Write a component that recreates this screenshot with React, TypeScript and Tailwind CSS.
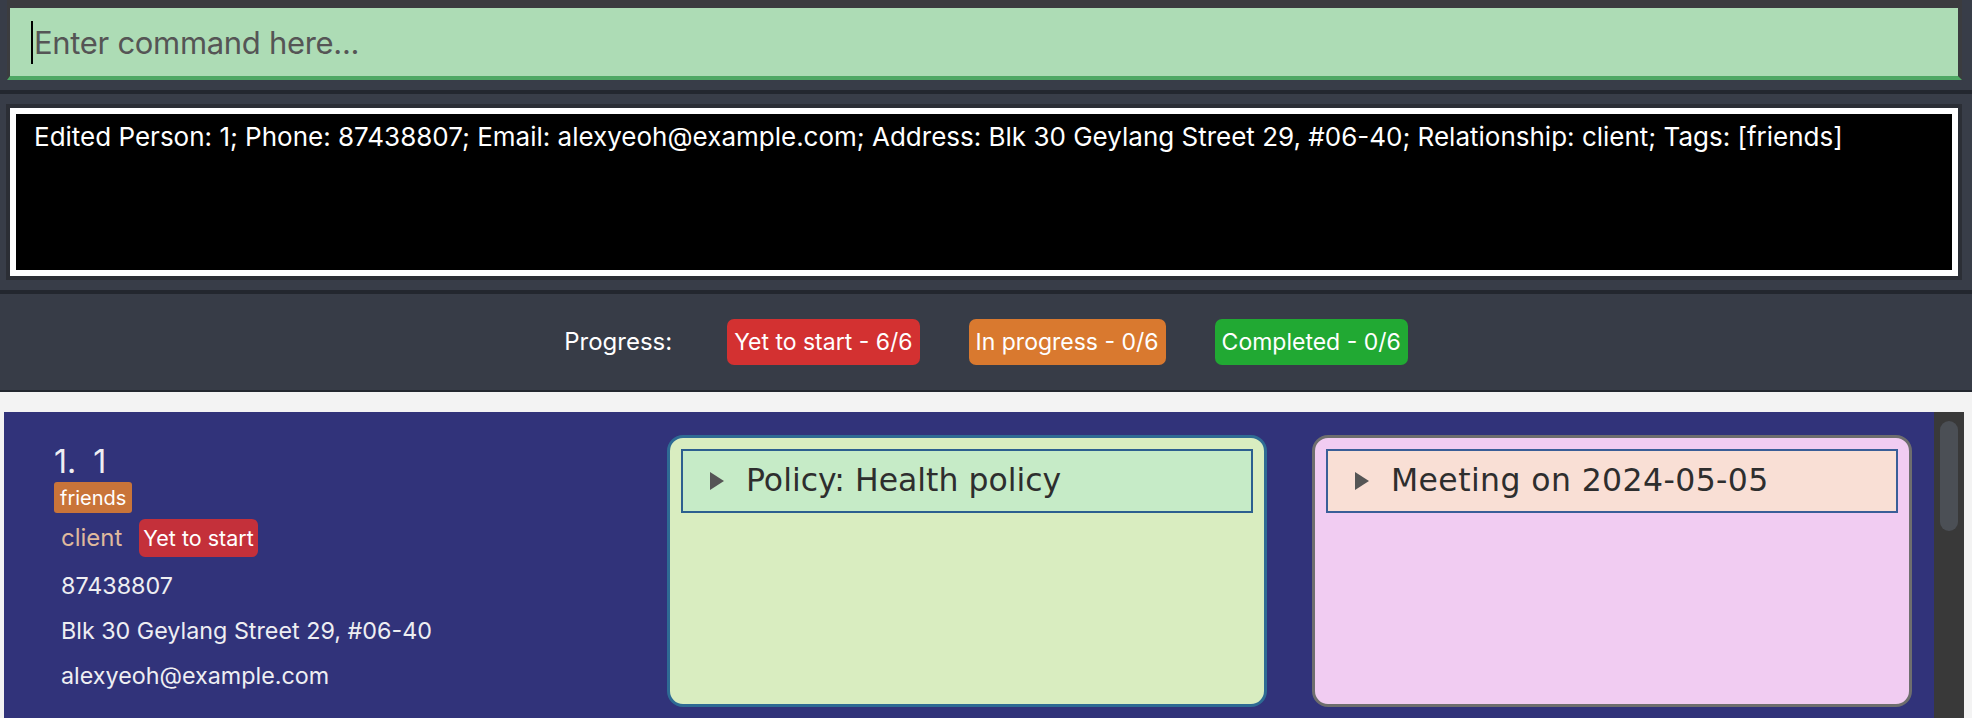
import React from "react";

function Caret() {
  return (
    <svg width="14" height="18" viewBox="0 0 14 18" className="shrink-0" aria-hidden="true">
      <path d="M0 0L14 9L0 18Z" fill="#555555" />
    </svg>
  );
}

function ProgressBadge({ label, color }: { label: string; color: string }) {
  return (
    <div className={`h-[46px] flex items-center px-[7px] rounded-[7px] text-white text-[23px] ${color}`}>
      {label}
    </div>
  );
}

function InfoCard({
  title,
  cardClass,
  headClass,
  titleClass,
}: {
  title: string;
  cardClass: string;
  headClass: string;
  titleClass: string;
}) {
  return (
    <div className={`w-[600px] h-[272px] shrink-0 rounded-[16px] border-[3px] p-[11px] ${cardClass}`}>
      <div className={`h-[64px] flex items-center gap-[22px] pl-[27px] border-2 ${headClass}`}>
        <Caret />
        <span className={`font-['DejaVu_Sans',sans-serif] text-[31.5px] leading-none text-[#2e2e2e] ${titleClass}`}>
          {title}
        </span>
      </div>
    </div>
  );
}

export default function App() {
  return (
    <div className="h-[718px] w-full overflow-hidden flex flex-col bg-[#383d48] font-['Inter',sans-serif]">
      {/* command box */}
      <div className="h-[80px] pl-[7px] pr-[10px] shrink-0">
        <div className="h-full flex items-center bg-[#addcb5] border-t-[8px] border-l-[3px] border-r-[4px] border-b-[4px] border-t-[#3b3c3f] border-l-[#3b3c3f] border-r-[#3b3c3f] border-b-[#4fa865] pl-[21px]">
          <div className="w-[2px] h-[43px] bg-black" />
          <span className="ml-[1px] text-[31px] tracking-[-0.01em] leading-none text-[#555555]">Enter command here...</span>
        </div>
      </div>

      <div className="h-[10px] shrink-0" />
      <div className="h-[4px] shrink-0 bg-[#23272f]" />
      <div className="h-[10px] shrink-0" />

      {/* result display */}
      <div className="h-[176px] ml-[6px] mr-[10px] shrink-0 border-[4px] border-[#2b2e35] bg-white p-[6px]">
        <div className="h-full bg-black pt-[10px] pl-[18px]">
          <p className="text-white text-[26px] leading-none whitespace-nowrap">
            Edited Person: 1; Phone: 87438807; Email: alexyeoh@example.com; Address: Blk 30 Geylang Street 29, #06-40; Relationship: client; Tags: [friends]
          </p>
        </div>
      </div>

      <div className="h-[10px] shrink-0" />
      <div className="h-[4px] shrink-0 bg-[#23272f]" />

      {/* progress bar */}
      <div className="h-[96px] shrink-0 flex items-center justify-center gap-[49px] bg-[#373c47]">
        <span className="mr-[6px] text-white text-[24px]">Progress:</span>
        <ProgressBadge label="Yet to start - 6/6" color="bg-[#d33131]" />
        <ProgressBadge label="In progress - 0/6" color="bg-[#d9792f]" />
        <ProgressBadge label="Completed - 0/6" color="bg-[#21a933]" />
      </div>
      <div className="h-[2px] shrink-0 bg-[#23272f]" />

      {/* person list */}
      <div className="flex-1 flex bg-[#f3f3f3] pt-[20px] pl-[4px] pr-[8px] min-h-0">
        <div className="flex-1 flex bg-[#31337a] pt-[23px] pr-[22px] gap-[45px]">
          <div className="flex-1 pl-[50px] pt-[11px] text-[#eeeef2]">
            <div className="flex items-baseline gap-[17px] text-[32px] leading-none">
              <span>1.</span>
              <span>1</span>
            </div>
            <div className="mt-[4px] flex">
              <span className="h-[31px] flex items-center px-[6px] rounded-[3px] bg-[#c97439] text-white text-[20px]">friends</span>
            </div>
            <div className="mt-[6px] h-[38px] flex items-center gap-[17px] pl-[7px]">
              <span className="text-[24px] text-[#dfb99d]">client</span>
              <span className="h-[38px] flex items-center px-[4px] rounded-[6px] bg-[#c4303a] text-white text-[21.5px]">Yet to start</span>
            </div>
            <div className="mt-[6px] pl-[7px] text-[23.3px] leading-none">
              <div className="h-[45px] flex items-center">87438807</div>
              <div className="h-[45px] flex items-center">Blk 30 Geylang Street 29, #06-40</div>
              <div className="h-[45px] flex items-center">alexyeoh@example.com</div>
            </div>
          </div>
          <InfoCard
            title="Policy: Health policy"
            cardClass="bg-[#d9edc0] border-[#2e6b94]"
            headClass="bg-[#c6ebc7] border-[#2c5f8f]"
            titleClass=""
          />
          <InfoCard
            title="Meeting on 2024-05-05"
            cardClass="bg-[#f1ccf2] border-[#6e6e6e]"
            headClass="bg-[#f9dfd5] border-[#3a5e98]"
            titleClass="tracking-[0.4px]"
          />
        </div>
        <div className="w-[30px] shrink-0 bg-[#393939] pt-[9px] px-[6px]">
          <div className="h-[110px] rounded-full bg-[#4b4f55]" />
        </div>
      </div>
    </div>
  );
}
